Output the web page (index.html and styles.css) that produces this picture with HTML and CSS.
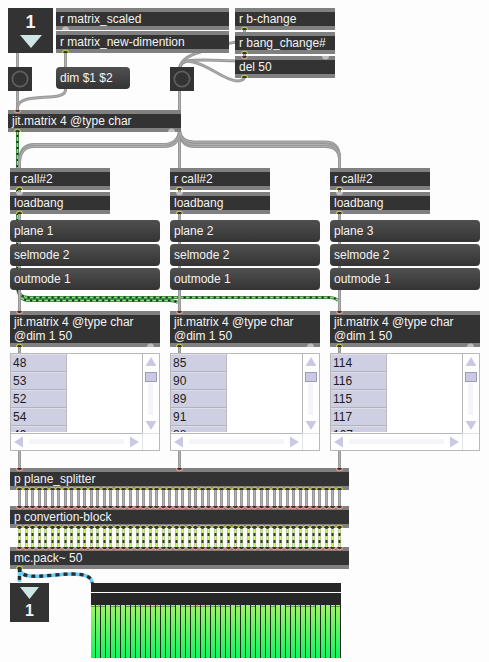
FILE: index.html
```
<!DOCTYPE html>
<html lang="en">
<head>
<meta charset="utf-8">
<title>Patcher</title>
<link rel="stylesheet" href="styles.css">
</head>
<body>
<main class="patcher" id="patcher">
<svg class="cords" id="cords" width="489" height="662" viewBox="0 0 489 662"></svg>
</main>
<script src="patch.js"></script>
</body>
</html>
```
FILE: styles.css
```
* { box-sizing: border-box; }
body { margin: 0; background: #fdfdfd; }
.patcher {
  position: relative;
  width: 489px;
  height: 662px;
  overflow: hidden;
  font: 12px/14px "Liberation Sans", Arial, sans-serif;
  color: #f4f4f4;
}
.cords, .ports { position: absolute; left: 0; top: 0; }
.cord { fill: none; stroke: #989898; stroke-width: 3; }
.cord-core { fill: none; stroke: #b0b0b0; stroke-width: 1; }
.cord-matrix { fill: none; stroke: #347a39; stroke-width: 3; }
.cord-matrix-dash { fill: none; stroke: #86e580; stroke-width: 1.4; stroke-dasharray: 4 2; }
.cord-matrix-dark { fill: none; stroke: #202a20; stroke-width: 1.6; stroke-dasharray: 2 4; stroke-dashoffset: 2; }
.cord-signal { fill: none; stroke: #b3c29c; stroke-width: 3; }
.cord-signal-core { fill: none; stroke: #c9ff62; stroke-width: 1.4; }
.cord-signal-dash { fill: none; stroke: #333; stroke-width: 2; stroke-dasharray: 3 4; }
.cord-mc { fill: none; stroke: #6bcdf5; stroke-width: 3.6; }
.cord-mc-dash { fill: none; stroke: #242e33; stroke-width: 3.4; stroke-dasharray: 4 4; }
.outlet { fill: #333; stroke: #c7cd45; stroke-width: 1.1; }
.inlet { fill: #333; stroke: #e59b8e; stroke-width: 1.1; }
.cold { fill: #bebebe; }
.node { position: absolute; white-space: nowrap; }
.object {
  padding: 0 4px;
  border: solid #808080;
  border-width: 4px 0;
  background: #333;
}
.object-label, .message-label { display: block; white-space: pre; }
.message {
  padding: 4px;
  border-radius: 4px;
  background: linear-gradient(#505050, #343434);
}
.button { background: #333; }
.button svg { display: block; }
.io {
  display: flex;
  flex-direction: column;
  align-items: center;
  background: #333;
  font-weight: bold;
}
.io-in { padding-top: 6px; font-size: 18px; line-height: 16px; gap: 5px; }
.io-out { padding-top: 4px; font-size: 16px; line-height: 15px; gap: 4px; }
.io svg { display: block; }
.cells {
  display: grid;
  border: 1px solid #b8b8b8;
  grid-template: 79px 17px / 131px 17px;
  background: #fff;
  color: #1c1c1c;
}
.cells-body { height: 78px; overflow: hidden; }
.cell {
  width: 56px;
  height: 18px;
  padding: 2px;
  border-right: 1px solid #bcbcc8;
  border-bottom: 1px solid #b2b2bc;
  box-shadow: inset 0 1px #dedeea;
  background: #cfcfe4;
}
.scroll-v { border-left: 1px solid #b8b8b8; }
.scroll-h { border-top: 1px solid #b8b8b8; }
.scroll-corner { border: solid #e2e2e2; border-width: 1px 0 0 1px; }
.scroll-v svg, .scroll-h svg { display: block; }
.arrow { fill: #c9c9e6; }
.track { fill: #f4f4f9; }
.thumb { fill: #c9c9e6; stroke: #9c9cb4; }
.slider { background: #262626; }
.slider-head { height: 9px; }
.slider-line { height: 1px; background: #fff; }
.slider-bars { display: flex; gap: 1px; margin-top: 12px; }
.slider-bar { width: 4px; height: 53px; background: linear-gradient(#a0f268, #10f562); }
.slider-bar.peak::before { content: ""; display: block; height: 1px; background: #679b43; transform: translateY(1px); }
```
FILE: patch.js
```
const patcher = document.getElementById('patcher');
const cords = document.getElementById('cords');
const COLUMNS = [10, 170, 330];
const CHANNELS = 50;
const channelX = i => Math.round(19 + i * 320 / (CHANNELS - 1)) + 0.5;

function add(x, y, w, h, kind, html) {
  const el = document.createElement('div');
  el.className = 'node ' + kind;
  el.style.cssText = `left:${x}px;top:${y}px;width:${w}px;height:${h}px`;
  el.innerHTML = html;
  patcher.appendChild(el);
}
const object = (x, y, w, text, h = 22) => add(x, y, w, h, 'object', `<span class="object-label">${text}</span>`);
const message = (x, y, w, text) => add(x, y, w, 22, 'message', `<span class="message-label">${text}</span>`);
const button = (x, y) => add(x, y, 24, 24, 'button', '<svg width="24" height="24"><circle cx="12" cy="12" r="7.7" fill="none" stroke="#606060" stroke-width="1.7"/></svg>');

let wires = '';
const path = (cls, d) => { wires += `<path class="${cls}" d="${d}"/>`; };
const cord = d => { path('cord', d); path('cord-core', d); };
const matrixCord = d => { path('cord-matrix', d); path('cord-matrix-dash', d); path('cord-matrix-dark', d); };

matrixCord('M17.5 131V286Q18 297.5 29 297.5H329Q337 298 338 301');
matrixCord('M17.5 286Q18 300.5 29 300.5H169Q177 301 178 303');
cord('M17.5 50V112');
cord('M65.5 52V90C65.5 103 17.5 91 17.5 108');
cord('M179.5 70C180 59 191 54 207 50C220 45 230 42 244.5 41');
cord('M179.5 70C180 57 194 60 244 61');
cord('M179.5 70C180 61 186 60 193 62C209 65 225 81 237 81Q244.5 81 244.5 76');
cord('M244.5 29V35M244.5 52V58');
cord('M179.5 90V312');
cord('M179.5 131Q178 144 164 144.5H34Q19.5 144.5 19.5 162V312');
cord('M179.5 131Q179 146.5 164 146.5H34Q20.5 146.5 19.5 162');
cord('M179.5 131Q181 142 194 142H325Q339.5 142 339.5 158V312');
cord('M179.5 131Q181 146.5 194 146.5H325Q338.5 146.5 339.5 158');
cord('M179.5 131Q181 144.5 194 144.5H325Q339 144.5 339.5 158');
COLUMNS.forEach(x => cord(`M${x + 9.5} 345V471`));
for (let i = 0; i < CHANNELS; i++) {
  const x = channelX(i);
  cord(`M${x} 488V509`);
  const d = `M${x} 526V549`;
  path('cord-signal', d);
  path('cord-signal-core', d);
  path('cord-signal-dash', d);
}
const mc = 'M19.5 568C19.5 582 50 574 72 574Q92 574 92 583';
path('cord-mc', mc);
path('cord-mc-dash', mc);
path('cord-mc', 'M19.5 568V582');
path('cord-mc-dash', 'M19.5 568V582');
cords.innerHTML = wires;

add(8, 8, 45, 45, 'io io-in', '<span>1</span><svg width="22" height="13"><path d="M0 0H22L11 13Z" fill="#cfe6e7"/></svg>');
object(56, 8, 173, 'r matrix_scaled');
object(56, 31, 173, 'r matrix_new-dimention');
object(235, 8, 100, 'r b-change');
object(235, 32, 100, 'r bang_change#');
object(235, 56, 100, 'del 50');
button(8, 67);
message(56, 67, 74, 'dim $1 $2');
button(170, 67);
object(8, 110, 173, 'jit.matrix 4 @type char');

const CELLS = [[48, 53, 52, 54, 49], [85, 90, 89, 91, 88], [114, 116, 115, 117, 107]];
COLUMNS.forEach((x, i) => {
  object(x, 168, 100, 'r call#2');
  object(x, 192, 100, 'loadbang');
  message(x, 220, 150, `plane ${i + 1}`);
  message(x, 244, 150, 'selmode 2');
  message(x, 268, 150, 'outmode 1');
  object(x, 311, 150, 'jit.matrix 4 @type char\n@dim 1 50', 36);
  add(x, 353, 150, 98, 'cells',
    `<div class="cells-body">${CELLS[i].map(v => `<div class="cell">${v}</div>`).join('')}</div>
    <div class="scroll-v"><svg width="16" height="79"><path class="arrow" d="M8 3L13.5 12H2.5ZM8 76L13.5 67H2.5Z"/><path class="track" d="M5 18H10V61H5Z"/><rect class="thumb" x="2.5" y="18.5" width="11" height="9"/></svg></div>
    <div class="scroll-h"><svg width="131" height="16"><path class="arrow" d="M3 8L12 2.5V13.5ZM128 8L119 2.5V13.5Z"/><path class="track" d="M18 5H113V10H18Z"/></svg></div>
    <div class="scroll-corner"></div>`);
});
object(10, 468, 339, 'p plane_splitter');
object(10, 506, 339, 'p convertion-block');
object(10, 547, 339, 'mc.pack~ 50');
add(10, 583, 39, 39, 'io io-out', '<svg width="19" height="12"><path d="M0 0H19L9.5 12Z" fill="#cfe6e7"/></svg><span>1</span>');

const UNPEAKED = new Set([3, 6, 17, 28, 30, 31, 33, 35, 37, 38, 45, 46, 47]);
const bars = Array.from({ length: 50 }, (_, i) => `<div class="slider-bar${UNPEAKED.has(i) ? '' : ' peak'}"></div>`).join('');
add(91, 583, 250, 75, 'slider', `<div class="slider-head"></div><div class="slider-line"></div><div class="slider-bars">${bars}</div>`);

let ports = '';
const outlet = (x, y) => { ports += `<path class="outlet" d="M${x - 3} ${y}A3 2.7 0 0 1 ${x + 3} ${y}"/>`; };
const inlet = (x, y) => { ports += `<path class="inlet" d="M${x - 3} ${y}A3 2.7 0 0 0 ${x + 3} ${y}"/>`; };
const coldOut = (x, y) => { ports += `<path class="cold" d="M${x - 3.5} ${y}A3.5 3.5 0 0 1 ${x + 3.5} ${y}Z"/>`; };
const coldIn = (x, y) => { ports += `<path class="cold" d="M${x - 3.5} ${y}A3.5 3.5 0 0 0 ${x + 3.5} ${y}Z"/>`; };
outlet(65.5, 53);
coldOut(65.5, 30);
[30, 54, 78].forEach(y => outlet(244.5, y));
inlet(244.5, 56);
coldIn(325.5, 56);
inlet(17.5, 110);
outlet(17.5, 132);
coldOut(171.5, 132);
COLUMNS.forEach(x => {
  outlet(x + 9.5, 190);
  coldIn(x + 9.5, 192);
  outlet(x + 9.5, 214);
  inlet(x + 9.5, 311);
  outlet(x + 9.5, 347);
  coldOut(x + 140.5, 347);
  inlet(x + 9.5, 468);
});
for (let i = 0; i < CHANNELS; i++) {
  const x = channelX(i);
  outlet(x, 490);
  inlet(x, 506);
  outlet(x, 528);
  inlet(x, 547);
}
outlet(19.5, 569);
patcher.insertAdjacentHTML('beforeend', `<svg class="ports" width="489" height="662">${ports}</svg>`);
```
